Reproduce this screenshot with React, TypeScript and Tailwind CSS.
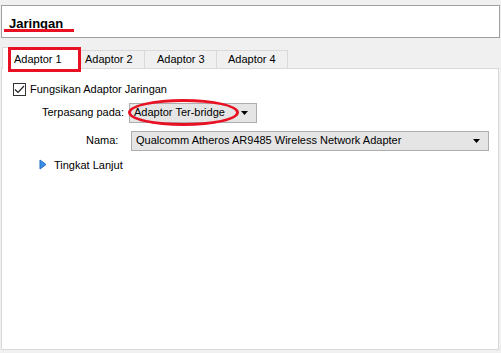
import React from "react";

const font = { fontFamily: '"Liberation Sans", Arial, sans-serif' };

function Tab({ label, className }: { label: string; className: string }) {
  return (
    <div className={`flex h-[18px] shrink-0 items-center border border-b-0 border-[#d9d9d9] bg-[#f0f0f0] text-[11px] text-black ${className}`}>
      {label}
    </div>
  );
}

function Combo({ text, className }: { text: string; className: string }) {
  return (
    <div
      className={`flex h-[20px] shrink-0 items-center justify-between border border-[#adadad] bg-[#e5e5e5] pl-[4px] pr-[8px] text-[11px] text-black ${className}`}
    >
      <span className="whitespace-nowrap">{text}</span>
      <svg width="7" height="4" viewBox="0 0 7 4">
        <path d="M0 0h7L3.5 4z" fill="#000" />
      </svg>
    </div>
  );
}

export default function App() {
  return (
    <div className="h-[353px] w-[501px] overflow-hidden bg-[#f0f0f0] pt-[5px]" style={font}>
      {/* Header */}
      <div className="mx-[1px] flex h-[33px] w-[499px] items-center border border-[#a0a0a0] bg-white pl-[7px] pt-[2px]">
        <div className="relative">
          <span className="text-[13px] font-bold text-black">Jaringan</span>
          <div className="absolute -left-[5px] top-[18px] h-[3px] w-[70px] bg-[#e81123]" />
        </div>
      </div>

      {/* Tabs */}
      <div className="mt-[9px] flex items-end pl-[2px]">
        <div className="relative z-10 -mb-px flex h-[22px] w-[77px] shrink-0 items-center border border-b-0 border-[#d9d9d9] bg-white pl-[11px] pt-[2px] text-[11px] text-black">
          Adaptor 1
          {/* red annotation box */}
          <div className="pointer-events-none absolute left-[5px] -top-[1px] h-[25px] w-[73px] border-[3px] border-[#e81123]" />
        </div>
        <Tab label="Adaptor 2" className="w-[66px] pl-[5px]" />
        <Tab label="Adaptor 3" className="-ml-px w-[73px] pl-[12px]" />
        <Tab label="Adaptor 4" className="-ml-px w-[72px] pl-[11px]" />
      </div>

      {/* Panel */}
      <div className="ml-[1px] h-[282px] w-[498px] border border-[#d9d9d9] bg-white pt-[12px] text-[11px] text-black">
        <div className="flex items-center pl-[11px]">
          <div className="flex h-[13px] w-[13px] items-center justify-center border border-[#333] bg-white">
            <svg width="11" height="9" viewBox="0 0 11 9">
              <path d="M1 4.5l3 3L10 1" stroke="#222" strokeWidth="1.2" fill="none" />
            </svg>
          </div>
          <span className="ml-[4px]">Fungsikan Adaptor Jaringan</span>
        </div>

        <div className="mt-[5px] flex items-center">
          <span className="ml-[40px] w-[87px] shrink-0 whitespace-nowrap">Terpasang pada:</span>
          <div className="relative">
            <Combo text="Adaptor Ter-bridge" className="w-[128px]" />
            {/* red annotation ellipse */}
            <div className="pointer-events-none absolute -left-[1px] -top-[4px] h-[27px] w-[111px] rounded-[50%] border-[3px] border-[#e81123]" />
          </div>
        </div>

        <div className="mt-[8px] flex items-center">
          <span className="ml-[84px] w-[45px] shrink-0">Nama:</span>
          <Combo text="Qualcomm Atheros AR9485 Wireless Network Adapter" className="w-[358px]" />
        </div>

        <div className="mt-[6px] flex items-center pl-[37px]">
          <svg width="8" height="11" viewBox="0 0 8 11">
            <path d="M1 1l6 4.5L1 10z" fill="#3d8ee6" stroke="#1f6fc4" strokeWidth="1" />
          </svg>
          <span className="ml-[7px]">Tingkat Lanjut</span>
        </div>
      </div>
    </div>
  );
}
